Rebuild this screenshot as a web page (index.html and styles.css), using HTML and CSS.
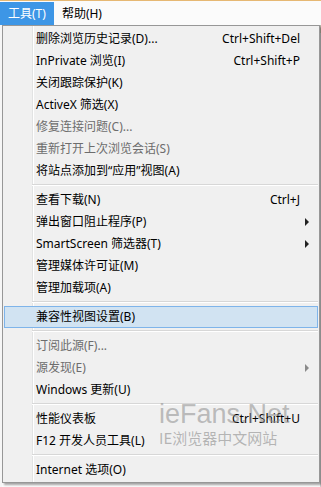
FILE: index.html
```html
<!DOCTYPE html>
<html lang="zh-CN">
<head>
<meta charset="utf-8">
<title>工具菜单</title>
<link rel="stylesheet" href="styles.css">
</head>
<body>
<div class="screen">
  <div class="topline"></div>
  <div class="menubar">
    <div class="mb-item active">工具(T)</div>
    <div class="mb-item">帮助(H)</div>
  </div>
  <div class="stage">
    <div class="side-left"></div>
    <div class="menu">
      <div class="item"><span class="label">删除浏览历史记录(D)...</span><span class="key">Ctrl+Shift+Del</span><span class="arrow-col"></span></div>
      <div class="item"><span class="label">InPrivate 浏览(I)</span><span class="key">Ctrl+Shift+P</span><span class="arrow-col"></span></div>
      <div class="item"><span class="label">关闭跟踪保护(K)</span><span class="arrow-col"></span></div>
      <div class="item"><span class="label">ActiveX 筛选(X)</span><span class="arrow-col"></span></div>
      <div class="item disabled"><span class="label">修复连接问题(C)...</span><span class="arrow-col"></span></div>
      <div class="item disabled"><span class="label">重新打开上次浏览会话(S)</span><span class="arrow-col"></span></div>
      <div class="item"><span class="label">将站点添加到“应用”视图(A)</span><span class="arrow-col"></span></div>
      <div class="sep"></div>
      <div class="item"><span class="label">查看下载(N)</span><span class="key">Ctrl+J</span><span class="arrow-col"></span></div>
      <div class="item"><span class="label">弹出窗口阻止程序(P)</span><span class="arrow-col"><i class="arrow"></i></span></div>
      <div class="item"><span class="label">SmartScreen 筛选器(T)</span><span class="arrow-col"><i class="arrow"></i></span></div>
      <div class="item"><span class="label">管理媒体许可证(M)</span><span class="arrow-col"></span></div>
      <div class="item"><span class="label">管理加载项(A)</span><span class="arrow-col"></span></div>
      <div class="sep"></div>
      <div class="item hover"><span class="label">兼容性视图设置(B)</span><span class="arrow-col"></span></div>
      <div class="sep"></div>
      <div class="item disabled"><span class="label">订阅此源(F)...</span><span class="arrow-col"></span></div>
      <div class="item disabled"><span class="label">源发现(E)</span><span class="arrow-col"><i class="arrow"></i></span></div>
      <div class="item"><span class="label">Windows 更新(U)</span><span class="arrow-col"></span></div>
      <div class="sep"></div>
      <div class="item"><span class="label">性能仪表板</span><span class="key">Ctrl+Shift+U</span><span class="arrow-col"></span></div>
      <div class="item"><span class="label">F12 开发人员工具(L)</span><span class="arrow-col"></span></div>
      <div class="sep"></div>
      <div class="item"><span class="label">Internet 选项(O)</span><span class="arrow-col"></span></div>
    </div>
    <div class="side-right"></div>
    <div class="watermark">
      <div class="wm-big">ieFans.Net</div>
      <div class="wm-small">IE浏览器中文网站</div>
    </div>
  </div>
</div>
</body>
</html>
```
FILE: styles.css
```css
html, body {
  margin: 0;
  padding: 0;
  background: #ffffff;
}
.screen {
  width: 321px;
  height: 487px;
  overflow: hidden;
  font-family: "Noto Sans", "Noto Sans CJK SC", sans-serif;
  font-size: 12px;
  color: #000;
  background: #fbfbfb;
}
.topline {
  height: 1px;
  background: #e6b873;
}
.menubar {
  display: flex;
  height: 24px;
  background: #fbfbfb;
}
.mb-item {
  padding: 0 8px;
  line-height: 23px;
  margin-top: 1px;
  color: #000;
}
.mb-item.active {
  background: #3d96e6;
  color: #fff;
}
.stage {
  position: relative;
  display: flex;
  align-items: flex-start;
}
.side-left {
  width: 2px;
  height: 462px;
  background: #f6f6f6;
}
.side-right {
  flex: 1;
  height: 462px;
  background: linear-gradient(to bottom, #bfb8a8 0, #bfb8a8 8px, #d0d0d0 8px);
}
.menu {
  width: 314px;
  border: 1px solid #979797;
  padding: 2px 1px 1px 1px;
  background: linear-gradient(to right, #f0f0f0 29px, #e2e3e3 29px, #e2e3e3 30px, #ffffff 30px, #ffffff 31px, #f0f0f0 31px);
  box-shadow: 2px 2px 2px rgba(0, 0, 0, 0.35);
  position: relative;
  z-index: 2;
}
.item {
  display: flex;
  align-items: center;
  height: 22px;
  line-height: 22px;
  padding-left: 32px;
  box-sizing: border-box;
  white-space: nowrap;
}
.item .label {
  flex: 1;
}
.item .key {
  text-align: right;
}
.arrow-col {
  width: 18px;
  display: flex;
  align-items: center;
  padding-left: 5px;
  box-sizing: border-box;
}
.arrow {
  display: block;
  width: 0;
  height: 0;
  border-top: 4px solid transparent;
  border-bottom: 4px solid transparent;
  border-left: 4px solid #222;
}
.item.disabled {
  color: #6d6d6d;
}
.item.disabled .arrow {
  border-left-color: #8a8a8a;
}
.item.hover {
  background: #d1e3f2;
  border: 1px solid #7eb4ea;
  padding-left: 31px;
}
.sep {
  height: 7px;
  margin-left: 28px;
  background: linear-gradient(to bottom, transparent 2px, #d7d7d7 2px, #d7d7d7 3px, #ffffff 3px, #ffffff 4px, transparent 4px);
}
.watermark {
  position: absolute;
  left: 159px;
  top: 374px;
  z-index: 3;
  pointer-events: none;
}
.wm-big {
  font-family: "Liberation Sans", Arial, sans-serif;
  font-size: 27px;
  line-height: 30px;
  color: rgba(140, 140, 140, 0.55);
}
.wm-small {
  font-family: "Noto Sans CJK SC", sans-serif;
  font-size: 15px;
  line-height: 18px;
  color: rgba(140, 140, 140, 0.6);
}
```
